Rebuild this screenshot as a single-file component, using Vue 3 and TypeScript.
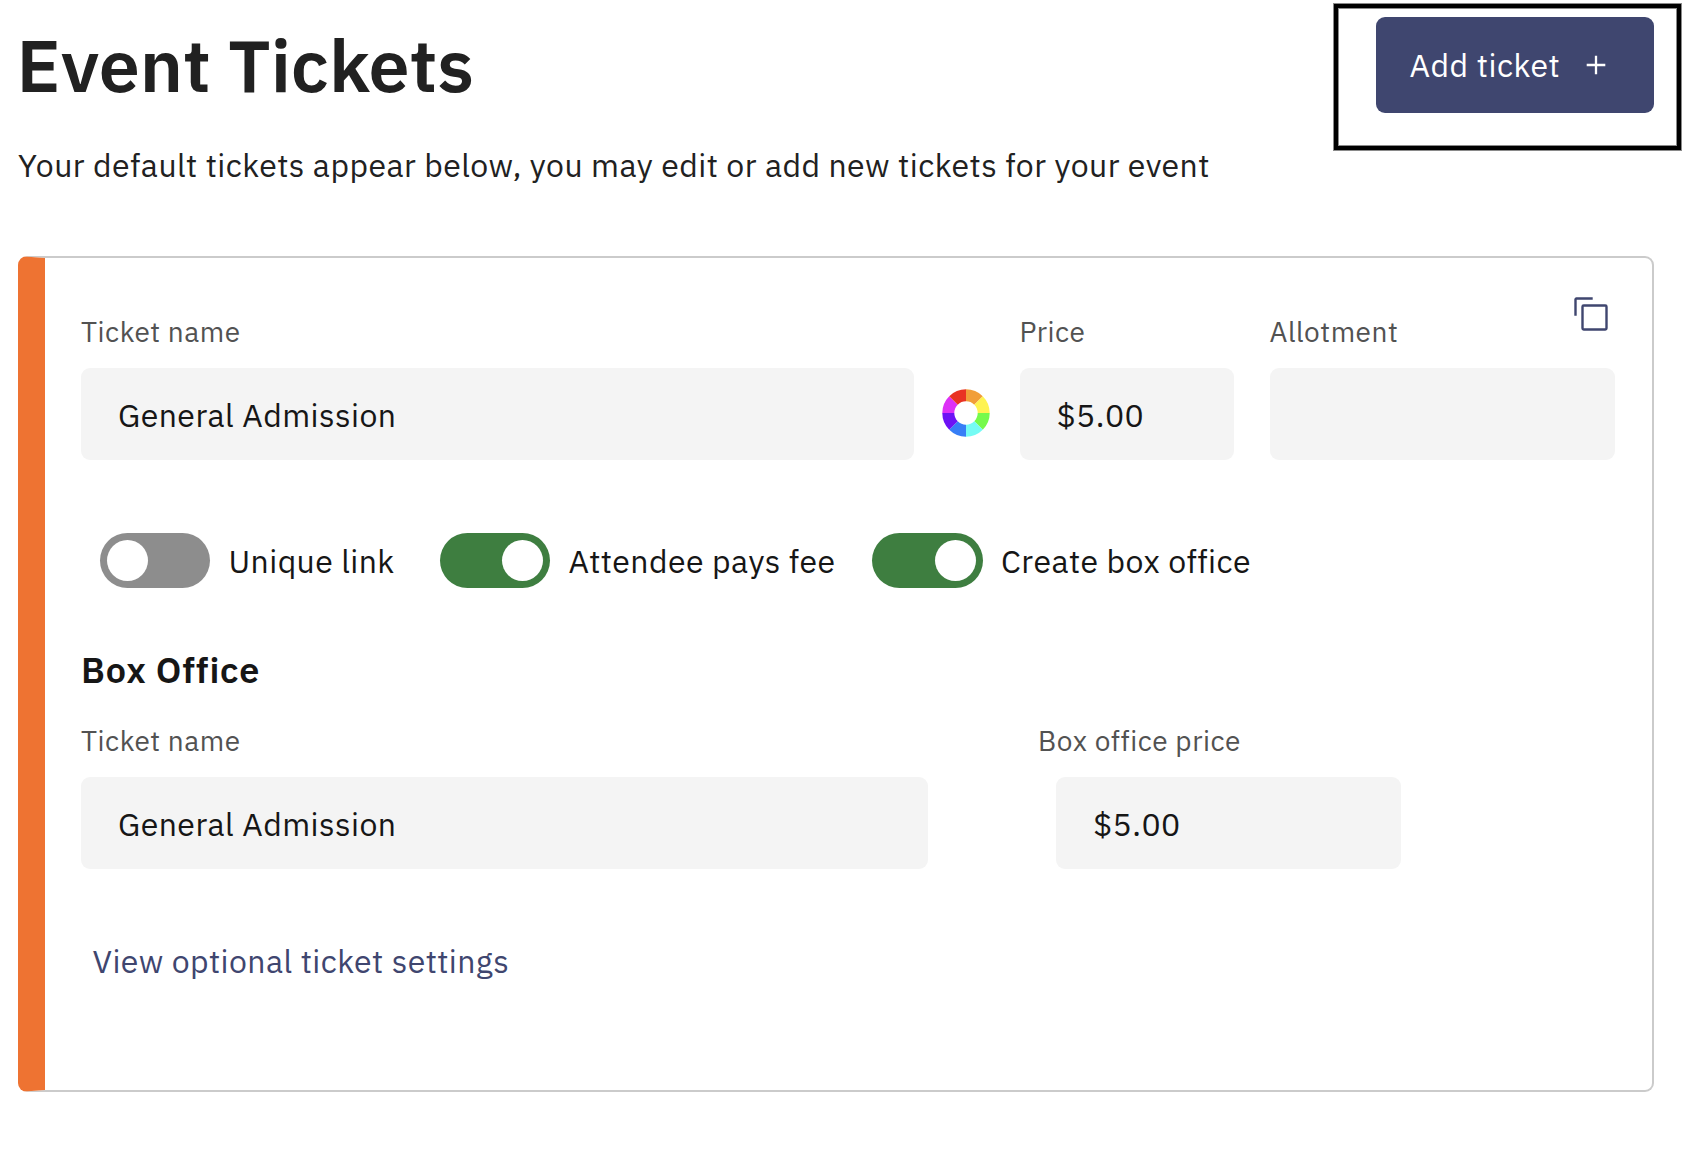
<script setup lang="ts">
import { ref } from 'vue'

interface Toggle {
  label: string
  on: boolean
  kind: string
}

const toggles = ref<Toggle[]>([
  { label: 'Unique link', on: false, kind: 'unique' },
  { label: 'Attendee pays fee', on: true, kind: 'attendee' },
  { label: 'Create box office', on: true, kind: 'office' },
])

const wheel = ['#f19e39', '#fef351', '#75fa4c', '#75fbf4', '#377ef6', '#6d12f5', '#dd30f6', '#e93223']

function slice(i: number): string {
  const point = (k: number, r: number) => {
    const a = (k * Math.PI) / 4
    return `${(24 + r * Math.sin(a)).toFixed(2)} ${(24 - r * Math.cos(a)).toFixed(2)}`
  }
  return `M${point(i, 23.7)}A23.7 23.7 0 0 1 ${point(i + 1, 23.7)}L${point(i + 1, 11.7)}A11.7 11.7 0 0 0 ${point(i, 11.7)}Z`
}
</script>

<template>
  <main class="page">
    <header class="top">
      <div class="intro">
        <h1>Event Tickets</h1>
        <p>Your default tickets appear below, you may edit or add new tickets for your event</p>
      </div>
      <div class="highlight">
        <button class="add" type="button">
          <span>Add ticket</span>
          <svg class="plus" viewBox="0 0 20 20"><path d="M10 .7v18.6M.7 10h18.6" /></svg>
        </button>
      </div>
    </header>

    <section class="card">
      <div class="row">
        <div class="field name">
          <label>Ticket name</label>
          <div class="box"><span>General Admission</span></div>
        </div>
        <svg class="wheel" viewBox="0 0 48 48">
          <path v-for="(color, i) in wheel" :key="color" :d="slice(i)" :fill="color" />
        </svg>
        <div class="field price">
          <label>Price</label>
          <div class="box"><span>$5.00</span></div>
        </div>
        <div class="field allotment">
          <label>Allotment</label>
          <div class="box"></div>
        </div>
        <svg class="copy" viewBox="0 0 34 34">
          <path d="M18.7 1.5H2.4a.9.9 0 0 0-.9.9V18.7" />
          <rect x="8.5" y="8.5" width="24" height="24" rx="1.2" />
        </svg>
      </div>

      <div class="toggles">
        <div v-for="t in toggles" :key="t.label" class="toggle" :class="[t.kind, { on: t.on }]">
          <i class="track"><b class="knob"></b></i>
          <span>{{ t.label }}</span>
        </div>
      </div>

      <h2>Box Office</h2>
      <div class="row office-row">
        <div class="field office-name">
          <label>Ticket name</label>
          <div class="box"><span>General Admission</span></div>
        </div>
        <div class="field office-price">
          <label>Box office price</label>
          <div class="box"><span>$5.00</span></div>
        </div>
      </div>

      <a class="more">View optional ticket settings</a>
    </section>
  </main>
</template>

<style>
body {
  margin: 0;
  background: #fff;
}
</style>

<style scoped>
.page {
  box-sizing: border-box;
  width: 1694px;
  height: 1162px;
  padding: 4px 13px 0 18px;
  background: #fff;
  font-family: "IBM Plex Sans", Roboto, "Liberation Sans", sans-serif;
  font-size: 32px;
  letter-spacing: 0.46px;
  color: #161616;
  overflow: hidden;
}
.top {
  display: flex;
  justify-content: space-between;
  height: 252px;
}
h1 {
  margin: 20px 0 0 -1.5px;
  font-size: 73.6px;
  font-weight: 600;
  line-height: 82px;
  letter-spacing: 0.04px;
  color: #212121;
}
.intro p {
  margin: 39px 0 0;
  line-height: 40px;
  letter-spacing: 0.449px;
  color: #212121;
  white-space: nowrap;
}
.highlight {
  box-sizing: border-box;
  width: 347px;
  height: 146px;
  padding: 9px 0 0 38px;
  border: 4px solid #000;
  box-shadow: 0 0 0 1px #8a8a8a, inset 0 0 0 1px #8a8a8a;
}
.add {
  box-sizing: border-box;
  display: flex;
  align-items: center;
  width: 278px;
  height: 96px;
  padding: 0 0 0 33.5px;
  border: 0;
  border-radius: 9px;
  background: #3f466f;
  color: #fff;
  font: inherit;
  letter-spacing: 0.51px;
}
.plus {
  width: 20px;
  height: 20px;
  margin-left: 25.5px;
  fill: none;
  stroke: #fff;
  stroke-width: 2.3;
}
.card {
  box-sizing: border-box;
  width: 1636px;
  height: 836px;
  padding: 56px 37px 0 36px;
  border: 2px solid #cbcbcb;
  border-left: 27px solid #ee7332;
  border-radius: 9px;
}
.row {
  display: flex;
  position: relative;
}
label {
  display: block;
  height: 36px;
  margin-bottom: 18px;
  font-size: 28px;
  line-height: 36px;
  letter-spacing: 0.52px;
  color: #525252;
  white-space: nowrap;
}
.box {
  box-sizing: border-box;
  height: 92px;
  padding: 2px 0 0 37px;
  border-radius: 9px;
  background: #f4f4f4;
  line-height: 90px;
}
.name {
  width: 833px;
}
.wheel {
  width: 48px;
  height: 48px;
  margin: 75.4px 29.5px 0 28px;
}
.price {
  width: 214px;
}
.allotment {
  width: 345px;
  margin-left: 36px;
}
.wheel,
.field {
  flex: none;
}
.copy {
  position: absolute;
  top: -17px;
  right: 7px;
  width: 34px;
  height: 34px;
  fill: none;
  stroke: #3f466f;
  stroke-width: 2.4;
}
.toggles {
  display: flex;
  height: 55px;
  margin: 73px 0 0 19px;
}
.toggle {
  display: flex;
  white-space: nowrap;
  line-height: 56px;
}
.unique {
  width: 340px;
  letter-spacing: 0.42px;
}
.attendee {
  width: 432px;
}
.track {
  box-sizing: border-box;
  flex: none;
  width: 110px;
  height: 55px;
  margin-right: 18.5px;
  padding: 7px;
  border-radius: 28px;
  background: #8d8d8d;
}
.office .track {
  width: 111px;
  margin-right: 18px;
}
.knob {
  display: block;
  width: 41px;
  height: 41px;
  border-radius: 50%;
  background: #fff;
}
.on .track {
  background: #3e7e40;
}
.on .knob {
  margin-left: auto;
}
h2 {
  margin: 60px 0 31px;
  font-size: 36px;
  font-weight: 600;
  line-height: 44px;
  letter-spacing: 0.78px;
}
.office-name {
  width: 847px;
}
.office-price {
  width: 363px;
  margin-left: 110px;
}
.office-price label {
  letter-spacing: 0.58px;
}
.office-price .box {
  width: 345px;
  margin-left: 18px;
}
.more {
  display: block;
  margin: 72px 0 0 11.5px;
  line-height: 40px;
  letter-spacing: 0.44px;
  color: #3f466f;
}
</style>
